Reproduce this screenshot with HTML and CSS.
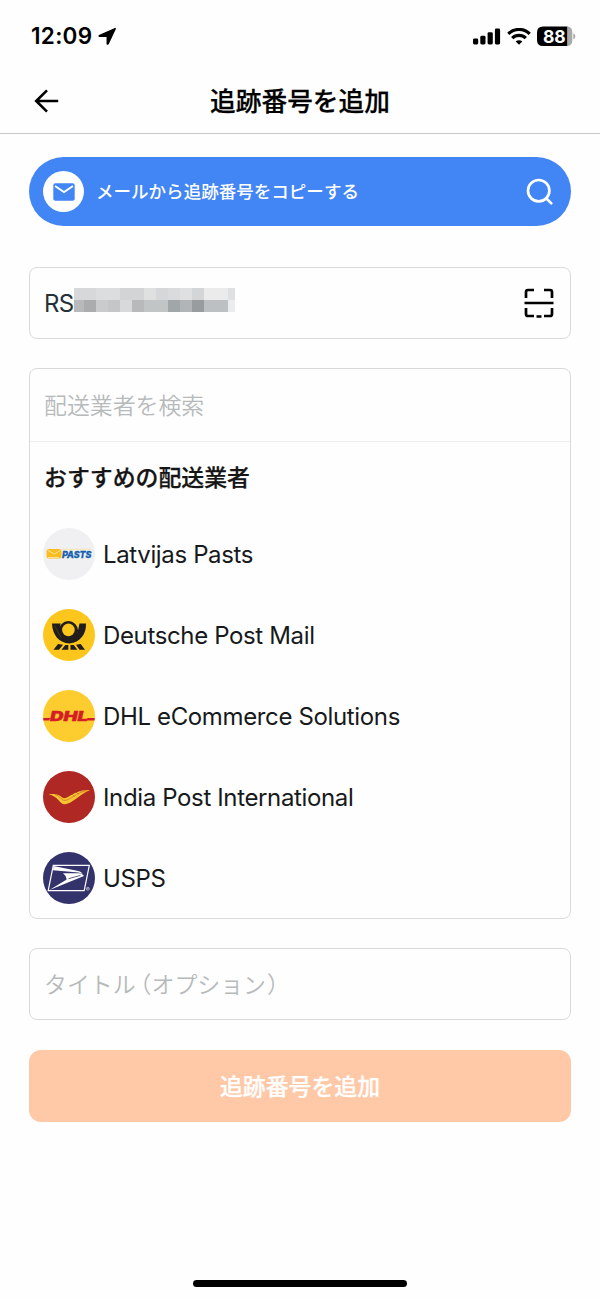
FILE: index.html
```
<!DOCTYPE html>
<html lang="ja">
<head>
<meta charset="utf-8">
<title>追跡番号を追加</title>
<link rel="stylesheet" href="styles.css">
</head>
<body>
<div class="screen">
  <div class="status">
    <div class="status-left">
      <span class="time">12:09</span>
      <svg class="location" width="19" height="19" viewBox="0 0 19 19"><path d="M17.200 1.600 1.300 8.600V9.200H9.300V17H10Z" stroke="#000" stroke-width="1.500" stroke-linejoin="round"/></svg>
    </div>
    <div class="status-right">
      <svg width="28" height="17" viewBox="0 0 28 17"><rect x="0" y="10.500" width="5.200" height="6" rx="1.400"/><rect x="7.300" y="7.800" width="5.200" height="8.700" rx="1.400"/><rect x="14.600" y="4.200" width="5.200" height="12.300" rx="1.400"/><rect x="21.900" y=".5" width="5.200" height="16" rx="1.400"/></svg>
      <svg width="24" height="17" viewBox="0 0 24 17" fill="none" stroke="#000" stroke-width="3.200"><path d="M1.300 5.800a15.300 15.300 0 0 1 21.400 0"/><path d="M5.200 10.200a9.700 9.700 0 0 1 13.600 0"/><path d="M12 16.800 8.700 13.500a4.700 4.700 0 0 1 6.600 0Z" fill="#000" stroke="none"/></svg>
      <svg width="39" height="21" viewBox="0 0 39 21"><path d="M6 .5H30.500V20H6Q0 20 0 14V6.500Q0 .5 6 .5Z"/><path d="M30.500.5Q35.300.8 35.300 6.500V14Q35.300 19.700 30.500 20Z" fill="#a9a9a9"/><path d="M36.300 7.200Q38.300 8 38.300 10.300T36.300 13.400Z" fill="#a9a9a9"/><text x="17.300" y="16.500" class="charge">88</text></svg>
    </div>
  </div>
  <header class="header">
    <svg class="back" width="26" height="24" viewBox="0 0 26 24"><path d="M13 1.400 2.200 12 13 22.600M2.200 12H24.200"/></svg>
    <h1>追跡番号を追加</h1>
  </header>
  <main>
    <div class="copy">
      <span class="mail"><svg width="22" height="18" viewBox="0 0 22 18"><rect x=".3" y=".3" width="21.400" height="17.400" rx="2"/><path d="m2 3 9 6 9-6"/></svg></span>
      <span class="copy-label">メールから追跡番号をコピーする</span>
      <svg class="search" width="28" height="28" viewBox="0 0 28 28"><circle cx="12.700" cy="12.700" r="10.700"/><path d="m20.200 20.200 5.100 5.200"/></svg>
    </div>
    <div class="field number">
      <span class="latin">RS</span>
      <svg class="mosaic" width="161" height="24" viewBox="0 0 161 24" shape-rendering="crispEdges"><path fill="#d7d8d9" d="M0 0h22v12H0z"/><path fill="#dcddde" d="M22 0h24v12H22z"/><path fill="#d3d4d5" d="M46 0h24v12H46z"/><path fill="#dfe0e0" d="M70 0h12v12H70zM106 0h12v12h-12z"/><path fill="#d6d7d8" d="M82 0h12v12H82z"/><path fill="#dadbdd" d="M94 0h12v12H94z"/><path fill="#d3d5d6" d="M118 0h12v12h-12z"/><path fill="#ebebeb" d="M130 0h24v12h-24z"/><path fill="#dfe0e2" d="M154 0h7v12h-7z"/><path fill="#b8b9ba" d="M0 12h10v12H0z"/><path fill="#aaacad" d="M10 12h12v12H10z"/><path fill="#cacbcc" d="M22 12h12v12H22z"/><path fill="#c5c6c7" d="M34 12h12v12H34z"/><path fill="#d8d9da" d="M46 12h12v12H46z"/><path fill="#b7b9ba" d="M58 12h12v12H58z"/><path fill="#c2c5c5" d="M70 12h24v12H70z"/><path fill="#a1a6a9" d="M94 12h12v12H94z"/><path fill="#b1b5b7" d="M106 12h12v12h-12z"/><path fill="#999c9f" d="M118 12h12v12h-12z"/><path fill="#bdc0c2" d="M130 12h24v12h-24z"/><path fill="#ebeced" d="M154 12h7v12h-7z"/></svg>
      <svg class="scan" width="30" height="30" viewBox="0 0 30 30"><path d="M2 10V4Q2 2 4 2h6M20 2h6q2 0 2 2v6M2 20v6q0 2 2 2h6M20 28h6q2 0 2-2v-6"/><path d="M.5 15h29M12.500 28.500h5" stroke-width="2.400"/></svg>
    </div>
    <section class="carriers">
      <div class="carrier-search placeholder">配送業者を検索</div>
      <h2>おすすめの配送業者</h2>
      <ul>
        <li><svg class="logo" viewBox="0 0 52 52"><circle cx="26" cy="26" r="26" fill="#f0f0f2"/><rect x="3.500" y="21" width="15" height="9.500" rx="2.500" fill="#f8bd1e"/><path d="m5 22.500 6.500 3.500 5.500-3.500M5 29.500h11" fill="none" stroke="#fbe7aa" stroke-width=".9"/><path d="M19 21.300h29" stroke="#f9df9b" stroke-width=".8"/><text x="19" y="29.500" textLength="29.500" lengthAdjust="spacingAndGlyphs" class="pasts">PASTS</text></svg><span>Latvijas Pasts</span></li>
        <li><svg class="logo" viewBox="0 0 52 52"><circle cx="26" cy="26" r="26" fill="#fdc61c"/><g fill="#211d1c"><path d="M9 14.500h8.700l-.8 3C16.900 29 30 32 34.500 23.500L36.500 14.500H43C43.500 25 37 33.500 26.500 34.500 16 34 9.500 26 9 14.500Z"/><circle cx="25.400" cy="21.800" r="9.700"/><path d="m15 35 5 .8-4 5h-5.500zM22.300 36h3v4.800h-6.800zM27.500 36h3.200l3.700 4.800h-6.900zM33 35.800l4.700-.8 4.300 5.800h-5.500z"/></g><circle cx="25.400" cy="20.900" r="6.300" fill="#fdc61c"/><path d="m11.500 16.500 6.500 12" fill="none" stroke="#6c5716" stroke-width=".5"/></svg><span>Deutsche Post Mail</span></li>
        <li><svg class="logo" viewBox="0 0 52 52"><circle cx="26" cy="26" r="26" fill="#fdcc2f"/><path d="M.2 28.100h7.300l-1.500 2.400H.4zM44.500 28.100h7.300l-.3 2.400h-8.300z" fill="#d51d27"/><text x="7" y="30.500" textLength="38" lengthAdjust="spacingAndGlyphs" class="dhl">DHL</text></svg><span>DHL eCommerce Solutions</span></li>
        <li><svg class="logo" viewBox="0 0 52 52"><circle cx="26" cy="26" r="26" fill="#b02823"/><path d="M5.500 23.300c7-1 10-.2 12.500 2.300 2 1.900 3.500 2 6 .9C31.500 22 36.500 18.700 47 18.900 37 23 30 32 22 33.300c-5 .8-6.300-8-16.500-10Z" fill="#f8c431"/><path d="M12 23.500c7 2 6 7.500 12 5.500 6.500-2.500 12-8.500 19.500-9.200" fill="none" stroke="#b02823" stroke-width=".4"/><path d="m29 23 2.500 2.500M33 21l2.500 2.500M37 19.500l2 2" stroke="#b02823" stroke-width=".4"/></svg><span>India Post International</span></li>
        <li><svg class="logo" viewBox="0 0 52 52"><circle cx="26" cy="26" r="26" fill="#34326b"/><path d="M10.300 13.300H46.300L41.200 38.700H5.200Z" fill="none" stroke="#fff" stroke-width="1.200"/><path d="M10.500 14 34 18.700c3.500.8 4.700 1.600 5.700 3.300l-4.200-1.500L10 18.200Z" fill="#fff"/><path d="M20 21.200h15.500c2.600 0 4.500 1.100 5.500 2.900L6.500 38l17.200-10.600Q23 23.200 20 21.200Z" fill="#fff"/><path d="m25.500 26.700 12-3.300" stroke="#34326b" stroke-width=".8"/><circle cx="44.800" cy="36.800" r="1.500" fill="none" stroke="#fff" stroke-width=".5"/><path d="M44.300 37.700v-1.700h1v.8" fill="none" stroke="#fff" stroke-width=".4"/></svg><span>USPS</span></li>
      </ul>
    </section>
    <div class="field title placeholder">タイトル<span class="paren">（</span>オプション<span class="paren-end">）</span></div>
    <button class="submit">追跡番号を追加</button>
  </main>
  <div class="home"></div>
</div>
</body>
</html>
```
FILE: styles.css
```
* { box-sizing: border-box; }
body { margin: 0; background: #fefefe; color: #17191b; font-family: "Noto Sans CJK JP", sans-serif; }
svg { display: block; flex: none; }
.screen { width: 600px; height: 1299px; display: flex; flex-direction: column; overflow: hidden; }
.status { height: 72px; padding: 0 24px 0 31px; display: flex; align-items: center; justify-content: space-between; }
.status-left { display: flex; align-items: center; gap: 5px; }
.time { font: 600 22.500px/26px Inter, sans-serif; color: #000; width: 62px; letter-spacing: .3px; white-space: nowrap; }
.status-right { display: flex; align-items: center; gap: 6px; }
.charge { font: 700 17.500px Inter, sans-serif; fill: #fff; text-anchor: middle; }
.header { height: 62px; border-bottom: 1px solid #c8c8c8; display: grid; grid-template-columns: 60px 1fr 60px; align-items: center; padding-bottom: 4px; }
.back { margin-left: 34px; fill: none; stroke: #000; stroke-width: 2.600; }
h1 { margin: -2px 0 0; text-align: center; font-size: 25.700px; line-height: 36px; font-weight: 500; color: #000; -webkit-text-stroke: .25px #000; }
main { padding: 23px 29px 0; display: flex; flex-direction: column; }
.copy { height: 69px; border-radius: 35px; background: #4285f5; display: flex; align-items: center; padding: 0 17px 0 14px; color: #fff; }
.mail { width: 41px; height: 41px; border-radius: 50%; background: #fff; display: grid; place-items: center; }
.mail rect { fill: #4285f5; }
.mail path { fill: none; stroke: #fff; stroke-width: 1.900; }
.copy-label { margin-left: 12px; font-size: 17.550px; font-weight: 500; line-height: 26px; padding-bottom: 2px; }
.search { margin-left: auto; fill: none; stroke: #fff; stroke-width: 2.700; stroke-linecap: round; }
.field { height: 72px; border: 1.500px solid #d9dada; border-radius: 8px; padding: 0 14px; display: flex; align-items: center; }
.number { margin-top: 41px; padding-right: 16px; }
.latin { font: 400 24px/30px Inter, sans-serif; width: 30px; color: #263036; letter-spacing: -.7px; padding-top: 2px; }
.mosaic { margin-top: -6px; }
.scan { margin-left: auto; fill: none; stroke: #000; stroke-width: 2.700; }
.carriers { margin-top: 29px; height: 551px; border: 1.500px solid #d9dada; border-radius: 8px; }
.carrier-search { height: 73px; border-bottom: 1px solid #eeefef; padding: 0 14px 3px; display: flex; align-items: center; }
.placeholder { color: #b7babb; font-size: 22.900px; font-weight: 350; line-height: 34px; }
h2 { margin: 17px 14px 0; font-size: 22.900px; line-height: 34px; font-weight: 500; color: #151515; -webkit-text-stroke: .25px #151515; }
ul { list-style: none; margin: 21px 0 0; padding: 0 13px; }
li { height: 81.100px; padding-top: 14px; display: flex; align-items: flex-start; gap: 7px; }
li span { font: 400 24px/52px Inter, sans-serif; letter-spacing: -.36px; white-space: nowrap; padding-top: 1px; }
.logo { width: 52px; height: 52px; margin-right: 1px; }
.pasts { font: italic 800 8.800px Inter, sans-serif; fill: #1660ad; stroke: #1660ad; stroke-width: .3px; }
.dhl { font: italic 900 13px Inter, sans-serif; fill: #d51d27; stroke: #d51d27; stroke-width: .4px; }
.title { margin-top: 29px; padding-bottom: 2px; }
.paren, .paren-end { font-feature-settings: "halt"; }
.paren { margin-left: 4.500px; }
.paren-end { margin-left: 1px; }
.submit { margin-top: 30px; height: 72px; border: 0; border-radius: 12px; background: #ffc9a7; color: #fff; padding: 0 0 2px; font: 500 22.900px/34px "Noto Sans CJK JP", sans-serif; -webkit-text-stroke: .25px #fff; }
.home { width: 214px; height: 7px; border-radius: 4px; background: #000; margin: auto auto 12px; }
```
